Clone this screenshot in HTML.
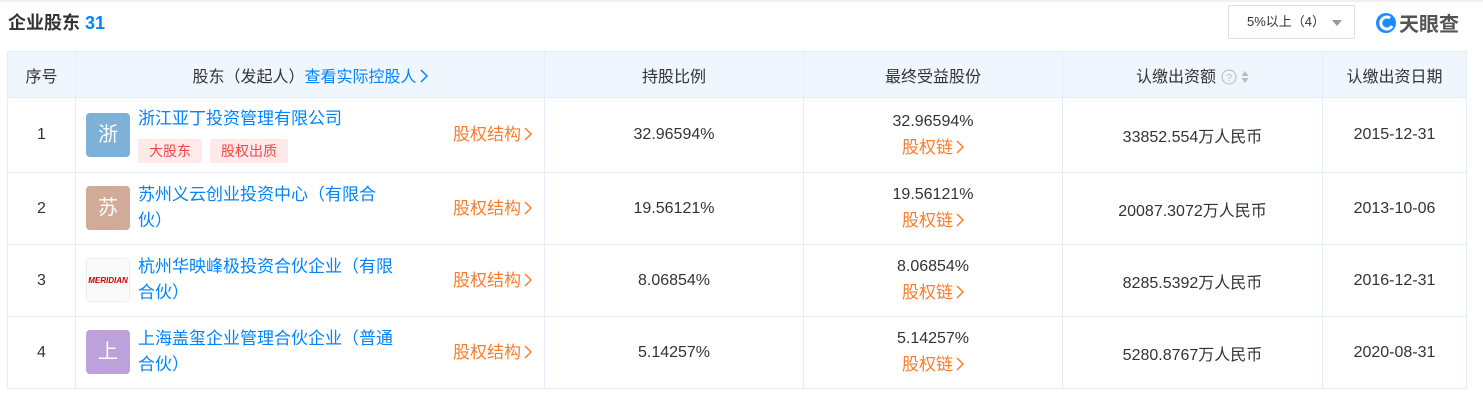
<!DOCTYPE html>
<html><head><meta charset="utf-8"><style>
*{margin:0;padding:0;box-sizing:border-box}
body{width:1483px;height:405px;background:#fff;font-family:"Liberation Sans","Noto Sans CJK SC",sans-serif;color:#333;position:relative;overflow:hidden}
.topline{position:absolute;left:0;top:0;width:1483px;height:2px;background:#f0f0f0}
.title{position:absolute;left:8px;top:9px;font-size:18px;font-weight:bold;color:#333}
.title span{color:#0084ff}
.sel{position:absolute;left:1228px;top:5px;width:127px;height:34px;border:1px solid #e0e0e0;border-radius:2px;font-size:13px;color:#333;line-height:32px;padding-left:18px}
.sel i{position:absolute;left:103px;top:14px;border-left:5px solid transparent;border-right:5px solid transparent;border-top:6px solid #999}
.logo{position:absolute;left:1375px;top:8px;font-size:20px;font-weight:bold;color:#555;display:flex;align-items:center}
table{position:absolute;left:7px;top:51px;border-collapse:collapse;font-size:16px}
td,th{border:1px solid #e4eef8;text-align:center;font-weight:normal}
th{background:#f0f6fd;height:46px;color:#333}
td{height:72px}
.b{color:#0084ff}
.o{color:#fa7d2c}
.av{width:44px;height:44px;border-radius:4px;color:#fff;font-size:20px;line-height:44px;text-align:center;position:absolute;left:10px}
.name{position:absolute;left:62px;width:280px;text-align:left;color:#0084ff;line-height:26px;white-space:nowrap;font-size:17px}
.sc{position:absolute;right:12px;top:50%;margin-top:-12px;color:#fa7d2c;line-height:24px;font-size:17px}
.tag{display:inline-block;background:#ffe9e9;color:#f54545;font-size:14px;padding:0 11px;height:24px;line-height:24px;border-radius:2px;margin-right:8px}
.cell{position:relative;height:71px}
.ch{display:inline-block;vertical-align:-1px;margin-left:3px}
</style></head><body>
<div class="topline"></div>
<div class="title">企业股东 <span>31</span></div>
<div class="sel">5%以上（4）<i></i></div>
<div class="logo"><svg width="22" height="22" viewBox="0 0 22 22"><circle cx="11" cy="11" r="10" fill="#1a8cff"/><path d="M15 6a6 6 0 1 0 2 8" stroke="#fff" stroke-width="3" fill="none"/></svg><span style="margin-left:2px">天眼查</span></div>
<table>
<tr><th style="width:68px">序号</th><th style="width:469px">股东（发起人）<span class="b">查看实际控股人<svg class="ch" width="8" height="14" viewBox="0 0 8 14"><path d="M1 1l6 6-6 6" stroke="#0084ff" stroke-width="1.5" fill="none"/></svg></span></th><th style="width:259px">持股比例</th><th style="width:259px">最终受益股份</th><th style="width:260px">认缴出资额 <svg width="16" height="16" viewBox="0 0 16 16" style="vertical-align:-3px"><circle cx="8" cy="8" r="7" stroke="#bbb" fill="none"/><text x="8" y="12" font-size="10" text-anchor="middle" fill="#bbb">?</text></svg> <svg width="8" height="14" viewBox="0 0 8 14" style="vertical-align:-2px"><path d="M4 1l3.5 5h-7zM4 13l3.5-5h-7z" fill="#bbb"/></svg></th><th style="width:144px">认缴出资日期</th></tr>
<tr><td style="height:75px">1</td><td><div class="cell" style="height:74px"><div class="av" style="background:#7eb1d7;top:15px">浙</div><div class="name" style="top:8px">浙江亚丁投资管理有限公司</div><div style="position:absolute;left:62px;top:41px"><span class="tag">大股东</span><span class="tag">股权出质</span></div><div class="sc">股权结构<svg class="ch" width="8" height="14" viewBox="0 0 8 14"><path d="M1 1l6 6-6 6" stroke="#fa7d2c" stroke-width="1.5" fill="none"/></svg></div></div></td><td>32.96594%</td><td style="line-height:26px">32.96594%<br><span class="o" style="font-size:17px">股权链<svg class="ch" width="8" height="14" viewBox="0 0 8 14"><path d="M1 1l6 6-6 6" stroke="#fa7d2c" stroke-width="1.5" fill="none"/></svg></span></td><td>33852.554万人民币</td><td>2015-12-31</td></tr>
<tr><td>2</td><td><div class="cell"><div class="av" style="background:#d2ab98;top:13px">苏</div><div class="name" style="top:9px">苏州义云创业投资中心（有限合<br>伙）</div><div class="sc">股权结构<svg class="ch" width="8" height="14" viewBox="0 0 8 14"><path d="M1 1l6 6-6 6" stroke="#fa7d2c" stroke-width="1.5" fill="none"/></svg></div></div></td><td>19.56121%</td><td style="line-height:26px">19.56121%<br><span class="o" style="font-size:17px">股权链<svg class="ch" width="8" height="14" viewBox="0 0 8 14"><path d="M1 1l6 6-6 6" stroke="#fa7d2c" stroke-width="1.5" fill="none"/></svg></span></td><td>20087.3072万人民币</td><td>2013-10-06</td></tr>
<tr><td>3</td><td><div class="cell"><div class="av" style="background:#fafafa;border:1px solid #eee;top:13px;font-size:8px;font-weight:bold;color:#c00;font-style:italic">MERIDIAN</div><div class="name" style="top:9px">杭州华映峰极投资合伙企业（有限<br>合伙）</div><div class="sc">股权结构<svg class="ch" width="8" height="14" viewBox="0 0 8 14"><path d="M1 1l6 6-6 6" stroke="#fa7d2c" stroke-width="1.5" fill="none"/></svg></div></div></td><td>8.06854%</td><td style="line-height:26px">8.06854%<br><span class="o" style="font-size:17px">股权链<svg class="ch" width="8" height="14" viewBox="0 0 8 14"><path d="M1 1l6 6-6 6" stroke="#fa7d2c" stroke-width="1.5" fill="none"/></svg></span></td><td>8285.5392万人民币</td><td>2016-12-31</td></tr>
<tr><td>4</td><td><div class="cell"><div class="av" style="background:#bca1da;top:13px">上</div><div class="name" style="top:9px">上海盖玺企业管理合伙企业（普通<br>合伙）</div><div class="sc">股权结构<svg class="ch" width="8" height="14" viewBox="0 0 8 14"><path d="M1 1l6 6-6 6" stroke="#fa7d2c" stroke-width="1.5" fill="none"/></svg></div></div></td><td>5.14257%</td><td style="line-height:26px">5.14257%<br><span class="o" style="font-size:17px">股权链<svg class="ch" width="8" height="14" viewBox="0 0 8 14"><path d="M1 1l6 6-6 6" stroke="#fa7d2c" stroke-width="1.5" fill="none"/></svg></span></td><td>5280.8767万人民币</td><td>2020-08-31</td></tr>
</table>
</body></html>
